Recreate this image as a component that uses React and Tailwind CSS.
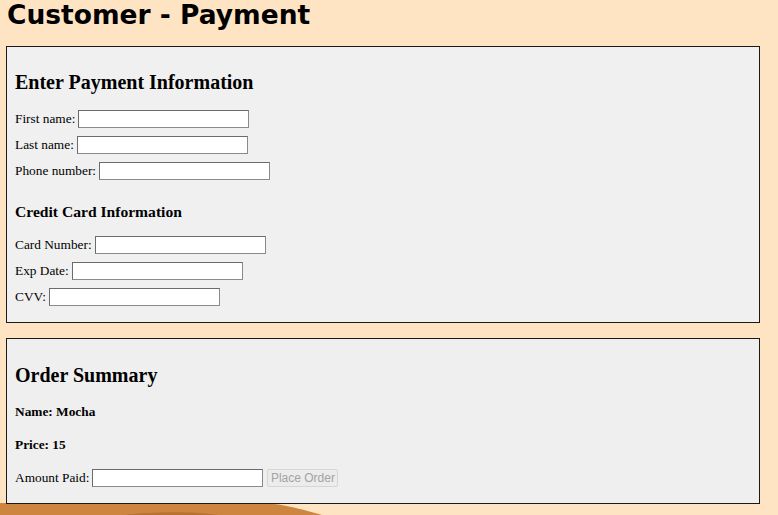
const serif = { fontFamily: '"Liberation Serif", "Times New Roman", serif' }

function Field({ label, width = 'w-[171px]' }) {
  return (
    <div className="flex h-[18px] items-center text-[13.33px] leading-none text-black">
      <span>{label}</span>
      <input
        type="text"
        className={`ml-[3px] h-[18px] ${width} border border-[#8a8a8a] border-t-[#6b6b6b] border-l-[#6b6b6b] bg-white`}
      />
    </div>
  )
}

export default function App() {
  return (
    <div className="relative h-[515px] w-[778px] overflow-hidden bg-[#ffe4c4]">
      <svg className="absolute bottom-0 left-0" width="778" height="14" viewBox="0 0 778 14">
        <path d="M0 2 L262 2 C285 3 300 8 322 14 L0 14 Z" fill="#cd853f" />
        <path d="M125 14 C150 11 190 10 218 14 Z" fill="#b9722f" />
      </svg>

      <div className="relative px-[6px]">
        <h1
          className="pl-[1px] text-[26.5px] font-bold leading-[30px] text-black"
          style={{ fontFamily: '"DejaVu Sans", Verdana, sans-serif' }}
        >
          Customer - Payment
        </h1>

        <div
          className="mt-[16px] w-[754px] border border-[#1a1a1a] bg-[#f0f0f0] px-[8px] pt-[24px] pb-[16px]"
          style={serif}
        >
          <h2 className="text-[20px] font-bold leading-[23px]">Enter Payment Information</h2>
          <div className="mt-[16px] flex flex-col gap-[8px]">
            <Field label="First name:" />
            <Field label="Last name:" />
            <Field label="Phone number:" />
          </div>
          <h3 className="mt-[23px] text-[15.6px] font-bold leading-[18px]">Credit Card Information</h3>
          <div className="mt-[15px] flex flex-col gap-[8px]">
            <Field label="Card Number:" />
            <Field label="Exp Date:" />
            <Field label="CVV:" />
          </div>
        </div>

        <div
          className="mt-[15px] w-[754px] border border-[#1a1a1a] bg-[#efefef] px-[8px] pt-[25px] pb-[16px]"
          style={serif}
        >
          <h2 className="text-[20px] font-bold leading-[23px]">Order Summary</h2>
          <p className="mt-[17px] text-[13.33px] font-bold leading-[15px]">Name: Mocha</p>
          <p className="mt-[18px] text-[13.33px] font-bold leading-[15px]">Price: 15</p>
          <div className="mt-[17px] flex items-center">
            <Field label="Amount Paid:" />
            <button
              disabled
              className="ml-[4px] h-[18px] w-[71px] rounded-[2px] border border-[#d6d6d6] bg-[#ececec] text-[12px] leading-none text-[#a3a3a3]"
              style={{ fontFamily: '"Liberation Sans", Arial, sans-serif' }}
            >
              Place Order
            </button>
          </div>
        </div>
      </div>
    </div>
  )
}
